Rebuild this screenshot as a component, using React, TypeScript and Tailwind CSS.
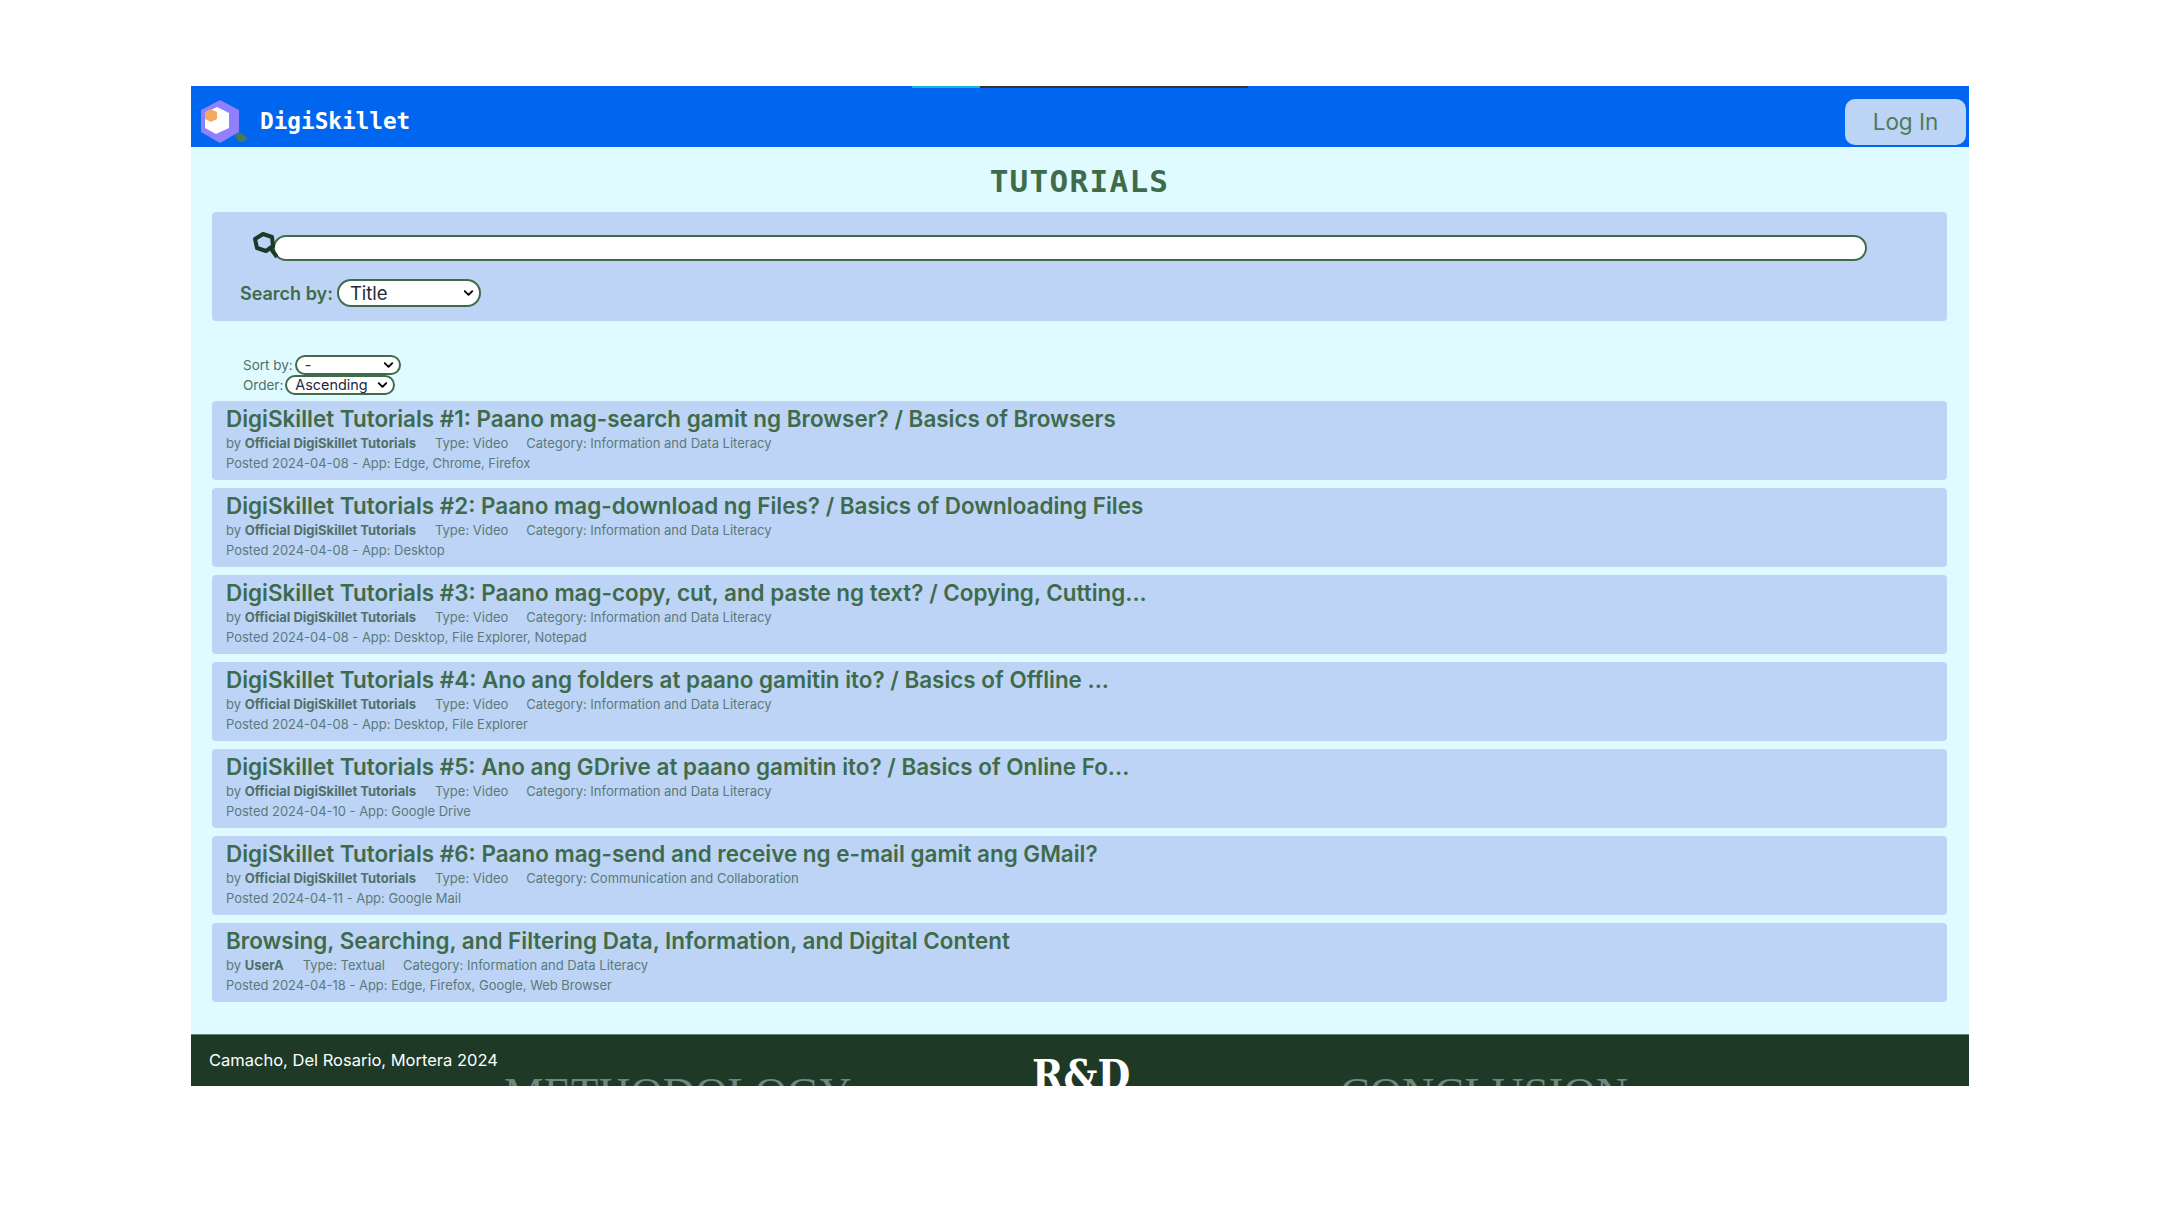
import React from "react";
import { ChevronDown } from "lucide-react";

const tutorials = [
  { title: "DigiSkillet Tutorials #1: Paano mag-search gamit ng Browser? / Basics of Browsers", by: "Official DigiSkillet Tutorials", type: "Video", category: "Information and Data Literacy", date: "2024-04-08", app: "Edge, Chrome, Firefox" },
  { title: "DigiSkillet Tutorials #2: Paano mag-download ng Files? / Basics of Downloading Files", by: "Official DigiSkillet Tutorials", type: "Video", category: "Information and Data Literacy", date: "2024-04-08", app: "Desktop" },
  { title: "DigiSkillet Tutorials #3: Paano mag-copy, cut, and paste ng text? / Copying, Cutting...", by: "Official DigiSkillet Tutorials", type: "Video", category: "Information and Data Literacy", date: "2024-04-08", app: "Desktop, File Explorer, Notepad" },
  { title: "DigiSkillet Tutorials #4: Ano ang folders at paano gamitin ito? / Basics of Offline ...", by: "Official DigiSkillet Tutorials", type: "Video", category: "Information and Data Literacy", date: "2024-04-08", app: "Desktop, File Explorer" },
  { title: "DigiSkillet Tutorials #5: Ano ang GDrive at paano gamitin ito? / Basics of Online Fo...", by: "Official DigiSkillet Tutorials", type: "Video", category: "Information and Data Literacy", date: "2024-04-10", app: "Google Drive" },
  { title: "DigiSkillet Tutorials #6: Paano mag-send and receive ng e-mail gamit ang GMail?", by: "Official DigiSkillet Tutorials", type: "Video", category: "Communication and Collaboration", date: "2024-04-11", app: "Google Mail" },
  { title: "Browsing, Searching, and Filtering Data, Information, and Digital Content", by: "UserA", type: "Textual", category: "Information and Data Literacy", date: "2024-04-18", app: "Edge, Firefox, Google, Web Browser" },
];

function Logo() {
  return (
    <svg width="48" height="46" viewBox="0 0 48 46" className="shrink-0">
      <path d="M35 36 L40 33 L47 39 L44 43 L38 42 Z" fill="#47795a" />
      <path d="M20 1 L39 11 L39 33 L20 44 L1 33 L1 11 Z" fill="#9180fb" />
      <path d="M17 8 L29 14 L29 29 L16 35 L5 29 L5 14 Z" fill="#ffffff" />
      <path d="M11 10 L17 13 L17 20 L11 23 L5 20 L5 13 Z" fill="#f4a963" />
    </svg>
  );
}

function SearchIcon() {
  return (
    <svg width="28" height="30" viewBox="0 0 28 30" className="shrink-0 relative z-10">
      <path d="M13 3 L22 6 L23 15 L16 20 L7 17 L5 8 Z" fill="none" stroke="#1e3a27" strokeWidth="4" strokeLinejoin="round" />
      <path d="M21 18 L27 26" stroke="#1e3a27" strokeWidth="4" />
    </svg>
  );
}

function Select({ label, className }: { label: string; className: string }) {
  return (
    <div className="relative shrink-0">
      <select className={"appearance-none block rounded-full border-2 border-[#3f6b4b] bg-white text-[#1e2a3a] " + className}>
        <option>{label}</option>
      </select>
      <ChevronDown size={15} strokeWidth={3} className="absolute right-[5px] top-1/2 -translate-y-1/2 text-black pointer-events-none" />
    </div>
  );
}

export default function App() {
  return (
    <div className="min-h-screen bg-white pt-[86px] pl-[191px] font-['Inter',sans-serif]">
      <div className="w-[1778px] h-[1000px] overflow-hidden flex flex-col bg-[#e0fbff]">
        <div className="h-[61px] shrink-0 bg-[#0066f0] flex flex-col">
          <div className="h-[2px] flex">
            <div className="w-[721px]" />
            <div className="w-[68px] bg-[#18b4d8]" />
            <div className="w-[268px] bg-[#333333]" />
          </div>
          <div className="flex-1 flex items-center justify-between pl-[9px] pr-[3px] pt-[8px]">
            <div className="flex items-center gap-[12px]">
              <Logo />
              <span className="font-['DejaVu_Sans_Mono',monospace] font-bold text-[22.7px] text-white">DigiSkillet</span>
            </div>
            <button className="w-[121px] h-[46px] rounded-[10px] bg-[#bcd4f6] text-[22.5px] text-[#4f7a5a]">Log In</button>
          </div>
        </div>

        <div className="flex-1 pl-[21px] pr-[22px] flex flex-col">
          <h1 className="h-[65px] pt-[4px] flex items-center justify-center font-['DejaVu_Sans_Mono',monospace] font-bold text-[31px] tracking-[1.3px] text-[#3f6b4b]">TUTORIALS</h1>

          <div className="h-[109px] rounded-[4px] bg-[#bdd4f6] pl-[28px] pt-[19px]">
            <div className="flex pl-[10px] items-start">
              <SearchIcon />
              <input className="ml-[-5px] mt-[4px] w-[1594px] h-[26px] rounded-full border-2 border-[#3f6b4b] bg-white" />
            </div>
            <div className="flex items-center gap-[4px] mt-[18px]">
              <span className="text-[18px] font-semibold text-[#3f6b4b]">Search by:</span>
              <Select label="Title" className="w-[144px] h-[28px] text-[18.5px] pl-[11px] leading-[22px]" />
            </div>
          </div>

          <div className="pl-[31px] pt-[34px] pb-[6px] text-[13.5px] text-[#4f6f68]">
            <div className="flex items-center gap-[2px] h-[20px]">
              <span>Sort by:</span>
              <Select label="-" className="w-[106px] h-[20px] text-[14.4px] pl-[8px] leading-[16px]" />
            </div>
            <div className="flex items-center gap-[2px] h-[20px]">
              <span>Order:</span>
              <Select label="Ascending" className="w-[110px] h-[20px] text-[14.4px] pl-[8px] leading-[16px]" />
            </div>
          </div>

          <div className="flex flex-col gap-[8px]">
            {tutorials.map((t) => (
              <div key={t.title} className="h-[79px] rounded-[4px] bg-[#bdd4f6] px-[14px] pt-[4px]">
                <div className="text-[22.45px] leading-[27px] font-semibold text-[#3f6b4b] whitespace-nowrap">{t.title}</div>
                <div className="flex text-[13px] leading-[19.5px] text-[#5a7a78] mt-[2px]">
                  <span>by <b className="font-bold text-[#4f7068]">{t.by}</b></span>
                  <span className="ml-[19px]">Type: {t.type}</span>
                  <span className="ml-[18px]">Category: {t.category}</span>
                </div>
                <div className="text-[12.95px] leading-[19.5px] text-[#5a7a78]">Posted {t.date} - App: {t.app}</div>
              </div>
            ))}
          </div>
        </div>

        <div className="h-[52px] shrink-0 bg-[#1e3a27] border-t border-[#5f8a78] flex pl-[18px] overflow-hidden">
          <span className="w-[295px] text-[16.5px] text-white mt-[13px] whitespace-nowrap">Camacho, Del Rosario, Mortera 2024</span>
          <span className="w-[528px] font-['Liberation_Serif',serif] text-[44.7px] leading-none text-[#71877a] mt-[36px] whitespace-nowrap">METHODOLOGY</span>
          <span className="w-[308px] font-['DejaVu_Serif_Condensed','DejaVu_Serif',serif] font-bold text-[42px] leading-none text-white mt-[20px] whitespace-nowrap">R&amp;D</span>
          <span className="font-['Liberation_Serif',serif] text-[44.7px] leading-none text-[#71877a] mt-[36px] whitespace-nowrap">CONCLUSION</span>
        </div>
      </div>
    </div>
  );
}
